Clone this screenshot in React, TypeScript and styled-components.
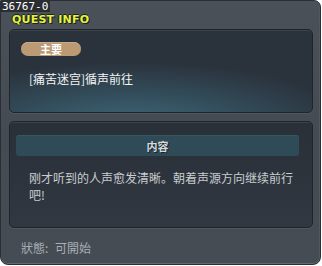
import styled, { createGlobalStyle } from "styled-components";

const GlobalStyle = createGlobalStyle`
  * { box-sizing: border-box; }
  body {
    margin: 0;
    background: #ffffff;
    font-family: "Noto Sans CJK SC", "Noto Sans", sans-serif;
  }
`;

const Window = styled.div`
  width: 321px;
  height: 265px;
  display: flex;
  flex-direction: column;
  padding: 0 7px 0 8px;
  background: linear-gradient(180deg, #4a5158 0%, #444b53 50%, #454c54 100%);
  border: 1px solid #2a2f35;
  border-radius: 0 7px 8px 8px;
  box-shadow: inset 0 -1px 0 #5c6a74, inset -1px 0 0 #505860;
`;

const Header = styled.div`
  height: 28px;
  margin-left: -8px;
  display: flex;
  flex-direction: column;
  align-items: flex-start;
`;

const WindowId = styled.span`
  font-family: "DejaVu Sans Mono", monospace;
  font-size: 11px;
  line-height: 12px;
  height: 11px;
  color: #ffffff;
  background: #2a2e33;
  padding: 0 2px 0 1px;
`;

const Title = styled.span`
  margin: 2px 0 0 11px;
  font-family: "DejaVu Sans", sans-serif;
  font-weight: bold;
  font-size: 11px;
  line-height: 12px;
  letter-spacing: 0.2px;
  color: #e4f43a;
  text-shadow: 1px 1px 0 #1c2126, -1px 0 0 #1c2126, 0 -1px 0 #1c2126;
`;

const Panel = styled.div<{ $height: number; $teal?: boolean }>`
  height: ${p => p.$height}px;
  flex-shrink: 0;
  border: 1px solid #1f252b;
  border-radius: 5px;
  box-shadow: inset 0 1px 0 #3a424c, 0 1px 0 #50585f;
  background: ${p => p.$teal
    ? "radial-gradient(ellipse 75% 80% at 40% 118%, #416878 0%, #34505e 45%, #2a323c 100%)"
    : "linear-gradient(180deg, #2a3038 0%, #2e343d 60%, #323841 100%)"};
`;

const QuestPanel = styled(Panel)`
  padding: 12px 12px 0 11px;
`;

const Badge = styled.div`
  width: 60px;
  height: 14px;
  border-radius: 7px;
  background: #bb9a74;
  box-shadow: inset 0 1px 0 #c8aa86;
  display: flex;
  align-items: center;
  justify-content: center;
  font-size: 11px;
  font-weight: bold;
  color: #ffffff;
`;

const QuestName = styled.div`
  margin: 15px 0 0 8px;
  font-size: 12px;
  line-height: 16px;
  color: #f2f4f5;
`;

const Spacer = styled.div`
  height: 8px;
  flex-shrink: 0;
`;

const DetailPanel = styled(Panel)`
  padding: 13px 13px 0 6px;
`;

const SectionBar = styled.div`
  height: 21px;
  border-radius: 3px;
  background: #2f4b58;
  box-shadow: inset 0 1px 0 #365662;
  display: flex;
  align-items: center;
  justify-content: center;
  font-size: 11px;
  font-weight: bold;
  color: #d4dadd;
  text-shadow: 1px 1px 0 #1a2228;
`;

const Description = styled.p`
  margin: 13px 0 0 13px;
  width: 268px;
  font-size: 12px;
  line-height: 17px;
  color: #c9cdd1;
`;

const Status = styled.div`
  flex: 1;
  display: flex;
  align-items: center;
  padding: 2px 0 0 12px;
  font-size: 12px;
  word-spacing: 4px;
  color: #a9afb5;
`;

export default function App() {
  return (
    <>
      <GlobalStyle />
      <Window>
        <Header>
          <WindowId>36767-0</WindowId>
          <Title>QUEST INFO</Title>
        </Header>
        <QuestPanel $height={84} $teal>
          <Badge>主要</Badge>
          <QuestName>[痛苦迷宫]循声前往</QuestName>
        </QuestPanel>
        <Spacer />
        <DetailPanel $height={107}>
          <SectionBar>内容</SectionBar>
          <Description>刚才听到的人声愈发清晰。朝着声源方向继续前行吧!</Description>
        </DetailPanel>
        <Status>狀態: 可開始</Status>
      </Window>
    </>
  );
}
